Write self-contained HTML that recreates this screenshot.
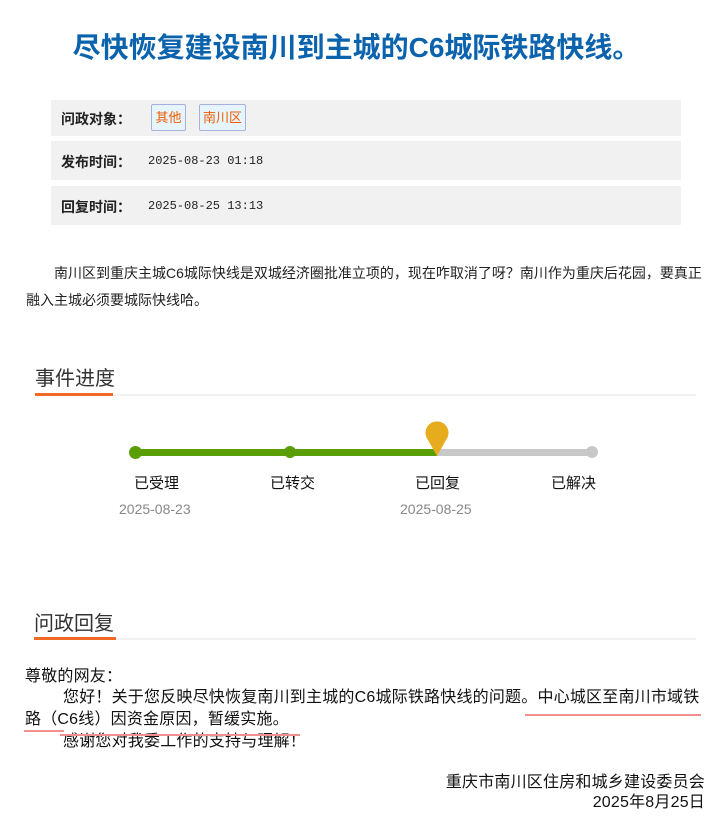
<!DOCTYPE html>
<html><head><meta charset="utf-8"><style>
*{margin:0;padding:0;box-sizing:border-box}
body{width:727px;height:832px;background:#fff;position:relative;font-family:"Liberation Sans","Noto Sans CJK SC",sans-serif;color:#222;overflow:hidden}
.a{position:absolute;white-space:nowrap}
.title{left:0;width:713px;top:29px;text-align:center;font-size:28px;font-weight:bold;color:#0b62ad;line-height:38px}
.row{position:absolute;left:51px;width:630px;background:#f1f1f1}
.lab{position:absolute;left:10px;font-size:14px;font-weight:bold;color:#222}
.val{position:absolute;left:97px;font-family:"Liberation Mono","Noto Sans CJK SC",monospace;font-size:12px;color:#222}
.tag{position:absolute;top:4px;height:27px;border:1px solid #aab0dd;background:#e6f4fb;color:#f05a00;font-size:13px;line-height:25px;text-align:center;border-radius:2px}
.p{font-size:14px;line-height:27px}
.h{font-size:20px;color:#333}
.ul{position:absolute;height:2px;background:#f06a25}
.gl{position:absolute;height:2px;background:#f2f2f2}
.tl{font-size:15px;color:#111}
.td{font-size:14px;color:#888}
.r{font-size:16px;color:#111;line-height:21px;letter-spacing:0.2px}
</style></head><body>
<div class="a title">尽快恢复建设南川到主城的C6城际铁路快线。</div>

<div class="row" style="top:100px;height:36px"><div class="lab" style="top:9px">问政对象：</div>
<div class="tag" style="left:100px;width:35px">其他</div><div class="tag" style="left:148px;width:47px">南川区</div></div>
<div class="row" style="top:141px;height:39px"><div class="lab" style="top:11px">发布时间：</div><div class="val" style="top:13px">2025-08-23 01:18</div></div>
<div class="row" style="top:186px;height:39px"><div class="lab" style="top:11px">回复时间：</div><div class="val" style="top:13px">2025-08-25 13:13</div></div>

<div class="a p" style="left:54px;top:260px">南川区到重庆主城C6城际快线是双城经济圈批准立项的，现在咋取消了呀？南川作为重庆后花园，要真正</div>
<div class="a p" style="left:26px;top:287px">融入主城必须要城际快线哈。</div>

<div class="a h" style="left:35px;top:362px">事件进度</div>
<div class="gl" style="left:35px;width:661px;top:394px"></div>
<div class="ul" style="left:35px;width:78px;top:393px;height:3px"></div>

<div class="a" style="left:135px;top:449px;width:302px;height:7px;background:#5a9e04"></div>
<div class="a" style="left:437px;top:449px;width:155px;height:7px;background:#c8c8c8"></div>
<div class="a" style="left:129px;top:446px;width:13px;height:13px;border-radius:50%;background:#5a9e04"></div>
<div class="a" style="left:284px;top:446px;width:12px;height:12px;border-radius:50%;background:#5a9e04"></div>
<div class="a" style="left:586px;top:446px;width:12px;height:12px;border-radius:50%;background:#c8c8c8"></div>
<svg class="a" style="left:425px;top:420px" width="24" height="37" viewBox="0 0 24 37"><path d="M12 36 L3 20 A11.5 11.5 0 1 1 21 20 Z" fill="#e6ac1e"/></svg>
<div class="a tl" style="left:134px;top:472px">已受理</div>
<div class="a tl" style="left:270px;top:472px">已转交</div>
<div class="a tl" style="left:415px;top:472px">已回复</div>
<div class="a tl" style="left:551px;top:472px">已解决</div>
<div class="a td" style="left:119px;top:501px">2025-08-23</div>
<div class="a td" style="left:400px;top:501px">2025-08-25</div>

<div class="a h" style="left:34px;top:607px">问政回复</div>
<div class="gl" style="left:34px;width:662px;top:638px"></div>
<div class="ul" style="left:34px;width:82px;top:637px;height:3px"></div>

<div class="a r" style="left:25px;top:666px">尊敬的网友：</div>
<div class="a r" style="left:63px;top:687px">您好！关于您反映尽快恢复南川到主城的C6城际铁路快线的问题。中心城区至南川市域铁</div>
<div class="a r" style="left:25px;top:709px">路（C6线）因资金原因，暂缓实施。</div>
<div class="a r" style="left:63px;top:731px">感谢您对我委工作的支持与理解！</div>
<div class="a" style="left:525px;top:714px;width:176px;height:2px;background:#f09090"></div>
<div class="a" style="left:24px;top:730px;width:40px;height:2px;background:#f09090"></div>
<div class="a" style="left:60px;top:734px;width:240px;height:2px;background:#f09090"></div>

<div class="a r" style="right:22px;top:772px">重庆市南川区住房和城乡建设委员会</div>
<div class="a r" style="right:22px;top:792px">2025年8月25日</div>
</body></html>
